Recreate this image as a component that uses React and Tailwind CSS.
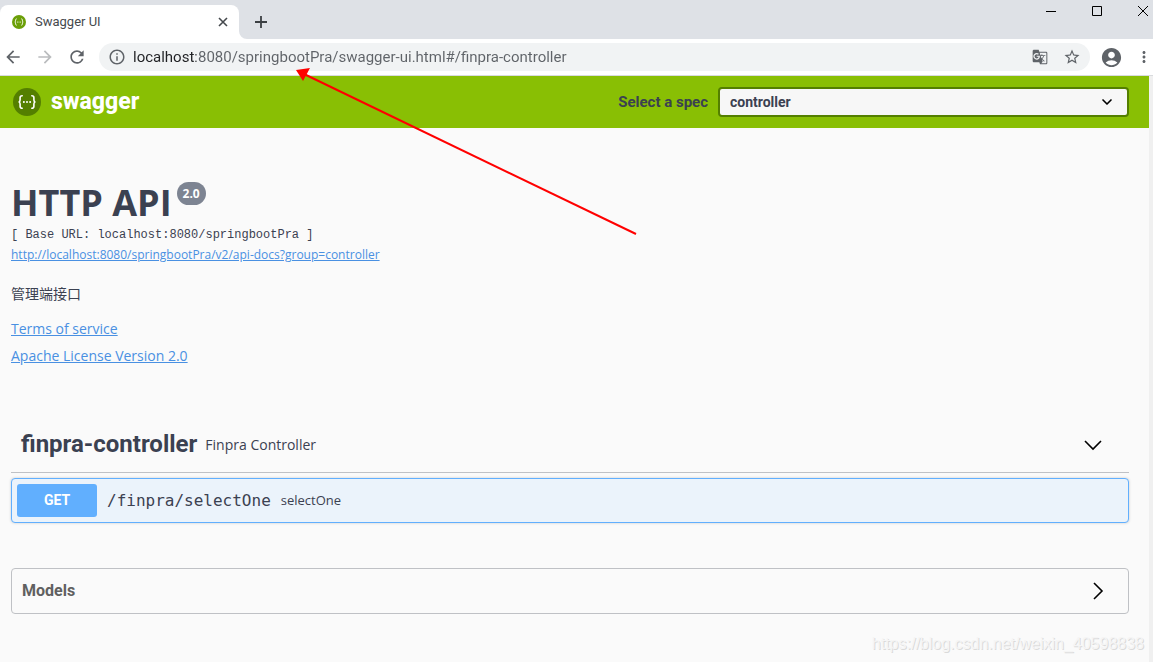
import { ChevronDown } from "lucide-react";
import {
  MdAccountCircle,
  MdArrowBack,
  MdArrowForward,
  MdGTranslate,
  MdInfoOutline,
  MdMoreVert,
  MdRefresh,
  MdStarBorder,
} from "react-icons/md";

const operations = [
  { method: "GET", path: "/finpra/selectOne", summary: "selectOne" },
];

function SwaggerMark({ className, circle }) {
  return (
    <svg viewBox="0 0 28 28" className={className} aria-hidden="true">
      <circle cx="14" cy="14" r="14" fill={circle} />
      <g fill="none" stroke="#fff" strokeWidth="1.6" strokeLinecap="round">
        <path d="M9.200 7.800c-1.600 0-2.100.6-2.100 2v2.200c0 1.300-.4 1.900-1.500 2 1.100.1 1.500.7 1.500 2v2.200c0 1.400.5 2 2.100 2" />
        <path d="M18.800 7.800c1.600 0 2.100.6 2.100 2v2.200c0 1.300.4 1.900 1.500 2-1.100.1-1.500.7-1.500 2v2.200c0 1.400-.5 2-2.100 2" />
      </g>
      <g fill="#fff">
        <circle cx="10.900" cy="14" r="1" />
        <circle cx="14" cy="14" r="1" />
        <circle cx="17.100" cy="14" r="1" />
      </g>
    </svg>
  );
}

function TabStrip() {
  return (
    <div className="flex h-[39px] items-end bg-[#dee1e6]">
      <div className="flex h-[34px] w-[239px] items-center rounded-t-lg bg-white pr-2 pl-3">
        <SwaggerMark className="h-[14px] w-[14px]" circle="#6b9f08" />
        <span className="ml-[9px] flex-1 font-['Roboto',sans-serif] text-[13px] text-[#45494d]">
          Swagger UI
        </span>
        <button aria-label="Close tab" className="flex h-4 w-4 items-center justify-center">
          <svg viewBox="0 0 10 10" className="h-[10px] w-[10px]">
            <path d="M1 1l8 8M9 1l-8 8" stroke="#45494d" strokeWidth="1.6" />
          </svg>
        </button>
      </div>
      <svg viewBox="0 0 8 8" className="h-2 w-2 self-end" aria-hidden="true">
        <path d="M0 0a8 8 0 0 0 8 8H0z" fill="#fff" />
      </svg>
      <button aria-label="New tab" className="flex h-[34px] w-7 items-center justify-center">
        <svg viewBox="0 0 12 12" className="h-3 w-3">
          <path d="M6 0v12M0 6h12" stroke="#3c4043" strokeWidth="1.8" />
        </svg>
      </button>
      <div className="ml-auto flex h-[22px] self-start">
        <button aria-label="Minimize" className="flex w-[46px] items-center justify-center">
          <svg viewBox="0 0 10 10" className="h-[10px] w-[10px]">
            <path d="M0 5.500h10" stroke="#000" />
          </svg>
        </button>
        <button aria-label="Maximize" className="flex w-[46px] items-center justify-center">
          <svg viewBox="0 0 10 10" className="h-[10px] w-[10px]">
            <path d="M.5.5h9v9h-9z" fill="none" stroke="#000" />
          </svg>
        </button>
        <button aria-label="Close" className="flex w-[33px] items-center justify-end pr-[5px]">
          <svg viewBox="0 0 10 10" className="h-[10px] w-[10px]">
            <path d="M0 0l10 10M10 0L0 10" stroke="#000" />
          </svg>
        </button>
      </div>
    </div>
  );
}

function Toolbar() {
  return (
    <div className="flex h-[37px] items-center border-b border-[#d9dbde] bg-white text-[#5f6368]">
      <button aria-label="Back" className="flex w-[26px] justify-center">
        <MdArrowBack size={20} />
      </button>
      <button aria-label="Forward" className="flex w-[38px] justify-center text-[#babcbe]">
        <MdArrowForward size={20} />
      </button>
      <button aria-label="Reload" className="flex w-[26px] justify-center">
        <MdRefresh size={20} />
      </button>
      <div className="ml-[9px] flex h-7 flex-1 items-center rounded-full bg-[#f1f3f4] px-[9px]">
        <MdInfoOutline size={18} />
        <input
          aria-label="Address"
          className="ml-[7px] min-w-0 flex-1 bg-[linear-gradient(to_right,#202124_63px,#5f6368_63px)] bg-clip-text font-['Roboto',sans-serif] text-[15px] text-transparent outline-none"
          defaultValue="localhost:8080/springbootPra/swagger-ui.html#/finpra-controller"
        />
        <button aria-label="Translate">
          <MdGTranslate size={16} />
        </button>
        <button aria-label="Bookmark" className="ml-[15px]">
          <MdStarBorder size={18} />
        </button>
      </div>
      <button aria-label="Profile" className="ml-[10px]">
        <MdAccountCircle size={23} />
      </button>
      <button aria-label="Menu" className="ml-3">
        <MdMoreVert size={18} />
      </button>
    </div>
  );
}

function Topbar() {
  return (
    <header className="flex h-13 items-center bg-[#89bf04] pr-5 pl-[13px] font-['Roboto',sans-serif]">
      <a href="#" className="flex items-center">
        <SwaggerMark className="h-7 w-7" circle="#547f00" />
        <span className="ml-[10px] text-[23px] leading-7 font-extrabold text-white">
          swagger
        </span>
      </a>
      <label
        htmlFor="spec"
        className="ml-auto pr-[10px] text-[15px] font-bold text-[#3b4151]"
      >
        Select a spec
      </label>
      <div className="relative w-[411px]">
        <select
          id="spec"
          className="h-[30px] w-full appearance-none rounded-sm border-2 border-[#547f00] bg-[#f7f7f7] pl-[10px] text-sm font-bold text-[#3b4151]"
        >
          <option>controller</option>
        </select>
        <ChevronDown
          size={16}
          strokeWidth={2.5}
          className="pointer-events-none absolute top-[7px] right-[14px] text-black"
        />
      </div>
    </header>
  );
}

function Info() {
  return (
    <section className="pt-[53px] text-sm text-[#3b4151]">
      <h2 className="flex items-start text-4xl leading-[44px] font-bold">
        HTTP API
        <span className="mt-px ml-[5px] rounded-full bg-[#7d8492] px-[6px] py-1 text-xs leading-[15px] text-white">
          2.0
        </span>
      </h2>
      <pre className="font-['Liberation_Mono',monospace] text-xs leading-5">
        [ Base URL: localhost:8080/springbootPra ]
      </pre>
      <a href="#" className="block text-xs leading-5 text-[#4990e2] underline">
        http://localhost:8080/springbootPra/v2/api-docs?group=controller
      </a>
      <p className="mt-[19px] leading-5">管理端接口</p>
      <a href="#" className="mt-[15px] block leading-5 text-[#4990e2] underline">
        Terms of service
      </a>
      <a href="#" className="mt-[7px] block leading-5 text-[#4990e2] underline">
        Apache License Version 2.0
      </a>
    </section>
  );
}

function Operation({ method, path, summary }) {
  return (
    <button className="mt-[5px] flex w-full items-center rounded-sm border border-[#61affe] bg-[#ebf3fb] p-[5px] text-left shadow-[0_0_3px_rgba(0,0,0,0.19)]">
      <span className="w-20 rounded-[3px] bg-[#61affe] text-center font-['Roboto',sans-serif] text-sm leading-[33px] font-bold text-white">
        {method}
      </span>
      <span className="px-[10px] font-['DejaVu_Sans_Mono',monospace] text-base text-[#3b4151]">
        {path}
      </span>
      <span className="text-[13px] text-[#3b4151]">{summary}</span>
    </button>
  );
}

export default function App() {
  return (
    <div className="relative flex min-h-screen flex-col overflow-hidden bg-[#fafafa] font-['Open_Sans','Noto_Sans_CJK_SC',sans-serif]">
      <TabStrip />
      <Toolbar />
      <div className="flex-1 border-r-4 border-[#f0f0f0]">
        <Topbar />
        <main className="pr-5 pl-[11px]">
          <Info />
          <section className="mt-[51px]">
            <h4 className="flex items-center border-b border-[#bfc1c5] pr-6 pl-[10px] text-[#3b4151]">
              <a
                href="#"
                className="font-['Roboto',sans-serif] text-2xl leading-[55px] font-bold"
              >
                finpra-controller
              </a>
              <small className="pl-2 text-sm">Finpra Controller</small>
              <button aria-label="Collapse operation" className="ml-auto text-black">
                <svg viewBox="0 0 24 24" className="h-6 w-6">
                  <path d="M4 8l8 8 8-8" fill="none" stroke="currentColor" strokeWidth="1.600" />
                </svg>
              </button>
            </h4>
            {operations.map((op) => (
              <Operation key={op.path} {...op} />
            ))}
          </section>
          <section className="mt-[45px] rounded-sm border border-[#bfc1c5]">
            <h4 className="flex items-center pr-[18px] pl-[10px] font-['Roboto',sans-serif] text-base leading-[44px] font-bold text-[#606060]">
              Models
              <button aria-label="Expand models" className="ml-auto text-black">
                <svg viewBox="0 0 24 24" className="h-6 w-6">
                  <path d="M8 4l8 8-8 8" fill="none" stroke="currentColor" strokeWidth="1.600" />
                </svg>
              </button>
            </h4>
          </section>
        </main>
      </div>
      <svg
        viewBox="0 0 342 168"
        className="pointer-events-none absolute top-[67px] left-[296px] h-[168px] w-[342px]"
        aria-hidden="true"
      >
        <path d="M8 7l332 160" stroke="#f00" strokeWidth="2" />
        <path d="M0 3l14-2-7 13z" fill="#f00" />
      </svg>
      <span className="pointer-events-none absolute right-[9px] bottom-2 font-['Liberation_Sans',sans-serif] text-base leading-5 text-[#f5f5f5] [text-shadow:1px_1px_0_#dadada]">
        https://blog.csdn.net/weixin_40598838
      </span>
    </div>
  );
}
